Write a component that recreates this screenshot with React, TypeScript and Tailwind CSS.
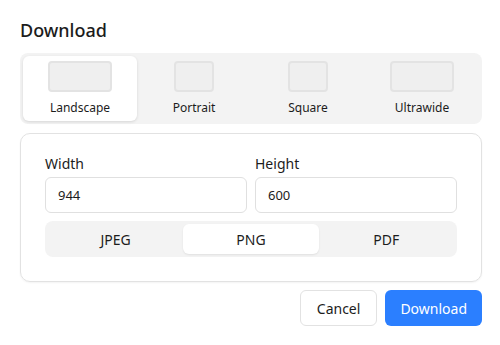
import { useState } from "react";

const sizes = [
  { name: "Landscape", box: "w-[64px] h-[31px]" },
  { name: "Portrait", box: "w-[40px] h-[31px]" },
  { name: "Square", box: "w-[40px] h-[31px]" },
  { name: "Ultrawide", box: "w-[64px] h-[31px]" },
];

const formats = ["JPEG", "PNG", "PDF"];

export default function App() {
  const [size, setSize] = useState("Landscape");
  const [format, setFormat] = useState("PNG");
  const [width, setWidth] = useState("944");
  const [height, setHeight] = useState("600");

  return (
    <div className="h-[345px] w-[500px] bg-white pl-5 pr-[18px] pt-[19px] text-[#1c1c1c] font-['Noto_Sans',sans-serif]">
      <h2 className="text-[18px] font-medium leading-[22px]">Download</h2>

      {/* aspect ratio picker */}
      <div className="mt-3 grid grid-cols-4 gap-0 rounded-lg bg-[#f3f3f3] p-[3px]">
        {sizes.map((s) => (
          <button
            key={s.name}
            onClick={() => setSize(s.name)}
            className={
              "flex h-[65px] flex-col items-center rounded-md pt-[5px] " +
              (size === s.name ? "bg-white shadow-[0_1px_3px_rgba(0,0,0,0.12)]" : "")
            }
          >
            <div className={"rounded-[4px] border-2 border-[#e3e3e3] bg-[#efefef] " + s.box} />
            <span className="mt-[9px] text-[12px] leading-[14px]">{s.name}</span>
          </button>
        ))}
      </div>

      {/* dimensions + format */}
      <div className="mt-[9px] rounded-[10px] border border-[#e2e2e2] px-6 pb-6 pt-[20px] shadow-[0_1px_2px_rgba(0,0,0,0.05)]">
        <div className="grid grid-cols-2 gap-2">
          <label className="flex flex-col">
            <span className="text-[14px] leading-[20px]">Width</span>
            <input
              value={width}
              onChange={(e) => setWidth(e.target.value)}
              className="mt-[3px] h-9 rounded-md border border-[#e0e0e0] px-3 text-[13px] outline-none"
            />
          </label>
          <label className="flex flex-col">
            <span className="text-[14px] leading-[20px]">Height</span>
            <input
              value={height}
              onChange={(e) => setHeight(e.target.value)}
              className="mt-[3px] h-9 rounded-md border border-[#e0e0e0] px-3 text-[13px] outline-none"
            />
          </label>
        </div>
        <div className="mt-2 grid grid-cols-3 rounded-lg bg-[#f3f3f3] p-[3px]">
          {formats.map((f) => (
            <button
              key={f}
              onClick={() => setFormat(f)}
              className={
                "h-[30px] rounded-md text-[14px] " +
                (format === f ? "bg-white shadow-[0_1px_2px_rgba(0,0,0,0.08)]" : "")
              }
            >
              {f}
            </button>
          ))}
        </div>
      </div>

      <div className="mt-2 flex justify-end gap-2">
        <button className="h-9 rounded-md border border-[#e2e2e2] bg-white px-4 text-[14px]">Cancel</button>
        <button className="h-9 rounded-md bg-[#2b7fff] px-[15px] text-[14px] text-white">Download</button>
      </div>
    </div>
  );
}
